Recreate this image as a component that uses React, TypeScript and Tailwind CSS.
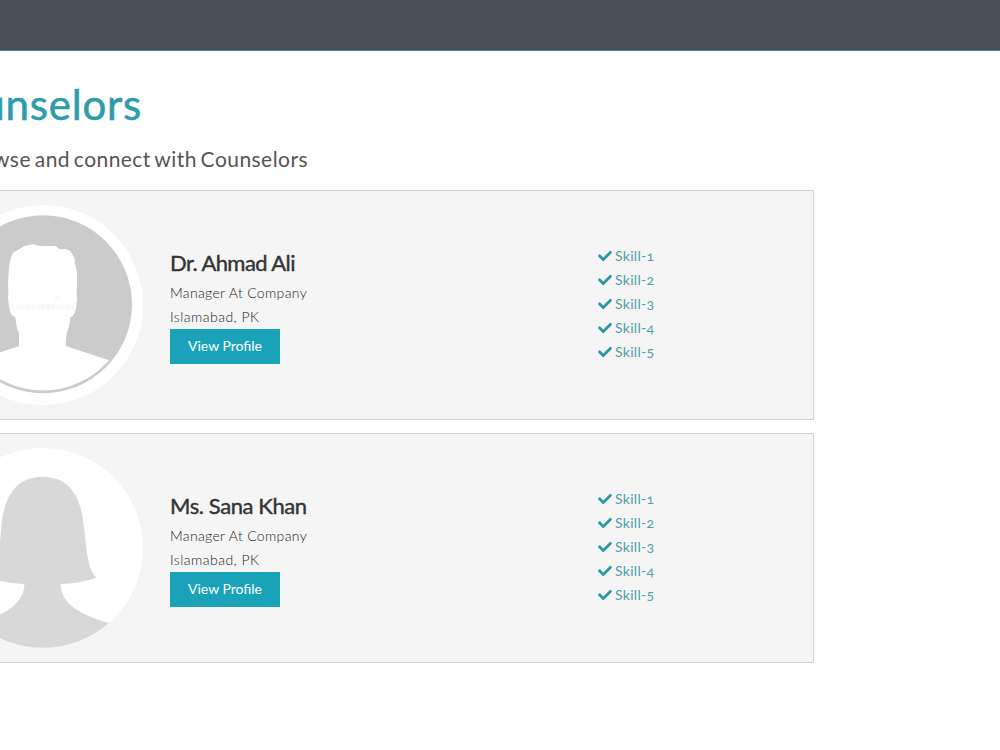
import { FaCheck } from "react-icons/fa";

interface Counselor {
  name: string;
  nameStyle: string;
  job: string;
  location: string;
  avatar: "male" | "female";
  skills: string[];
}

const counselors: Counselor[] = [
  {
    name: "Dr. Ahmad Ali",
    nameStyle: "tracking-[-0.58px]",
    job: "Manager At Company",
    location: "Islamabad, PK",
    avatar: "male",
    skills: ["Skill-1", "Skill-2", "Skill-3", "Skill-4", "Skill-5"],
  },
  {
    name: "Ms. Sana Khan",
    nameStyle: "tracking-[-0.42px]",
    job: "Manager At Company",
    location: "Islamabad, PK",
    avatar: "female",
    skills: ["Skill-1", "Skill-2", "Skill-3", "Skill-4", "Skill-5"],
  },
];

const MaleAvatar = () => (
  <svg viewBox="-171 45 600 600" className="h-[200px] w-[200px] shrink-0">
    <circle cx="129" cy="345" r="300" fill="#fff" />
    <circle cx="129" cy="343" r="267" fill="#cbcbcb" />
    <path
      fill="#fff"
      d="M25 317 Q23 270 27 235 Q30 200 42 185 L53 181 Q72 165 100 163 Q112 170 134 168 L167 168 L178 178 L198 177 Q215 183 218 195 L225 210 L224 220 Q231 235 231 265 L230 317 Q234 322 229 345 Q227 377 211 382 Q208 410 202 425 Q197 440 197 468 L327 511 A262 262 0 0 1 -69 511 L57 468 L57 430 Q50 420 46 382 Q32 378 28 355 Q22 322 25 317 Z"
    />
    <path
      d="M35 350 H222 M165 326 h16"
      stroke="#f3f3f3"
      strokeWidth="14"
      strokeDasharray="9 4 14 3"
      opacity="0.55"
    />
  </svg>
);

const FemaleAvatar = () => (
  <svg viewBox="-171 48 600 600" className="h-[200px] w-[200px] shrink-0">
    <circle cx="129" cy="348" r="300" fill="#fff" />
    <path
      fill="#d8d8d8"
      d="M129 134 C205 134 240 190 249 265 C256 320 258 350 264 380 Q271 420 289 437 Q240 455 182 456 C180 510 235 547 327 573 A300 300 0 0 1 -69 573 C23 547 74 510 73 456 Q15 455 -31 437 Q-13 420 -6 380 C0 350 0 320 6 265 C17 190 50 134 129 134 Z"
    />
  </svg>
);

const CounselorCard = ({ counselor }: { counselor: Counselor }) => (
  <div className="flex h-[230px] w-[885px] items-center border border-[#d2d2d2] bg-[#f5f5f5] pl-[13px]">
    {counselor.avatar === "male" ? <MaleAvatar /> : <FemaleAvatar />}

    <div className="ml-[27px] flex w-[428px] flex-col items-start">
      <h3
        className={`-mt-px mb-px text-[22px] leading-[34px] font-normal whitespace-nowrap text-[#333] [-webkit-text-stroke:0.4px_#333] ${counselor.nameStyle}`}
      >
        {counselor.name}
      </h3>
      <p className="text-sm leading-6 font-light tracking-[0.34px] text-[#222]">
        {counselor.job}
      </p>
      <p className="text-sm leading-6 font-light tracking-[0.46px] text-[#222]">
        {counselor.location}
      </p>
      <button className="h-[35px] w-[110px] bg-[#1aa3b8] text-sm text-white">
        View Profile
      </button>
    </div>

    <ul className="-mt-[2px]">
      {counselor.skills.map((skill) => (
        <li
          key={skill}
          className="flex h-6 items-center gap-[3px] text-sm tracking-[0.3px] text-[#4fa0aa] oldstyle-nums"
        >
          <FaCheck className="size-3.5 text-[#2b99a6]" />
          <span>{skill}</span>
        </li>
      ))}
    </ul>
  </div>
);

export default function App() {
  return (
    <div className="h-[750px] w-[1000px] overflow-hidden bg-white font-[Lato,'Open_Sans',sans-serif]">
      <header className="h-[51px] border-b border-[#3f8a90] bg-[#4a4f57]" />

      <main className="-ml-[71px]">
        <div className="flex w-[213px] justify-end pt-[25px]">
          <h1 className="text-[42px] leading-[56px] font-normal tracking-[0.8px] whitespace-nowrap text-[#2f9cad] [-webkit-text-stroke:0.6px_#2f9cad]">
            Counselors
          </h1>
        </div>
        <div className="flex w-[379px] justify-end pt-[11px]">
          <p className="text-[21px] leading-[32px] font-normal tracking-[0.45px] whitespace-nowrap text-[#555] [word-spacing:-2px]">
            Browse and connect with Counselors
          </p>
        </div>

        <div className="mt-[15px] flex flex-col gap-[13px]">
          {counselors.map((counselor) => (
            <CounselorCard key={counselor.name} counselor={counselor} />
          ))}
        </div>
      </main>
    </div>
  );
}
